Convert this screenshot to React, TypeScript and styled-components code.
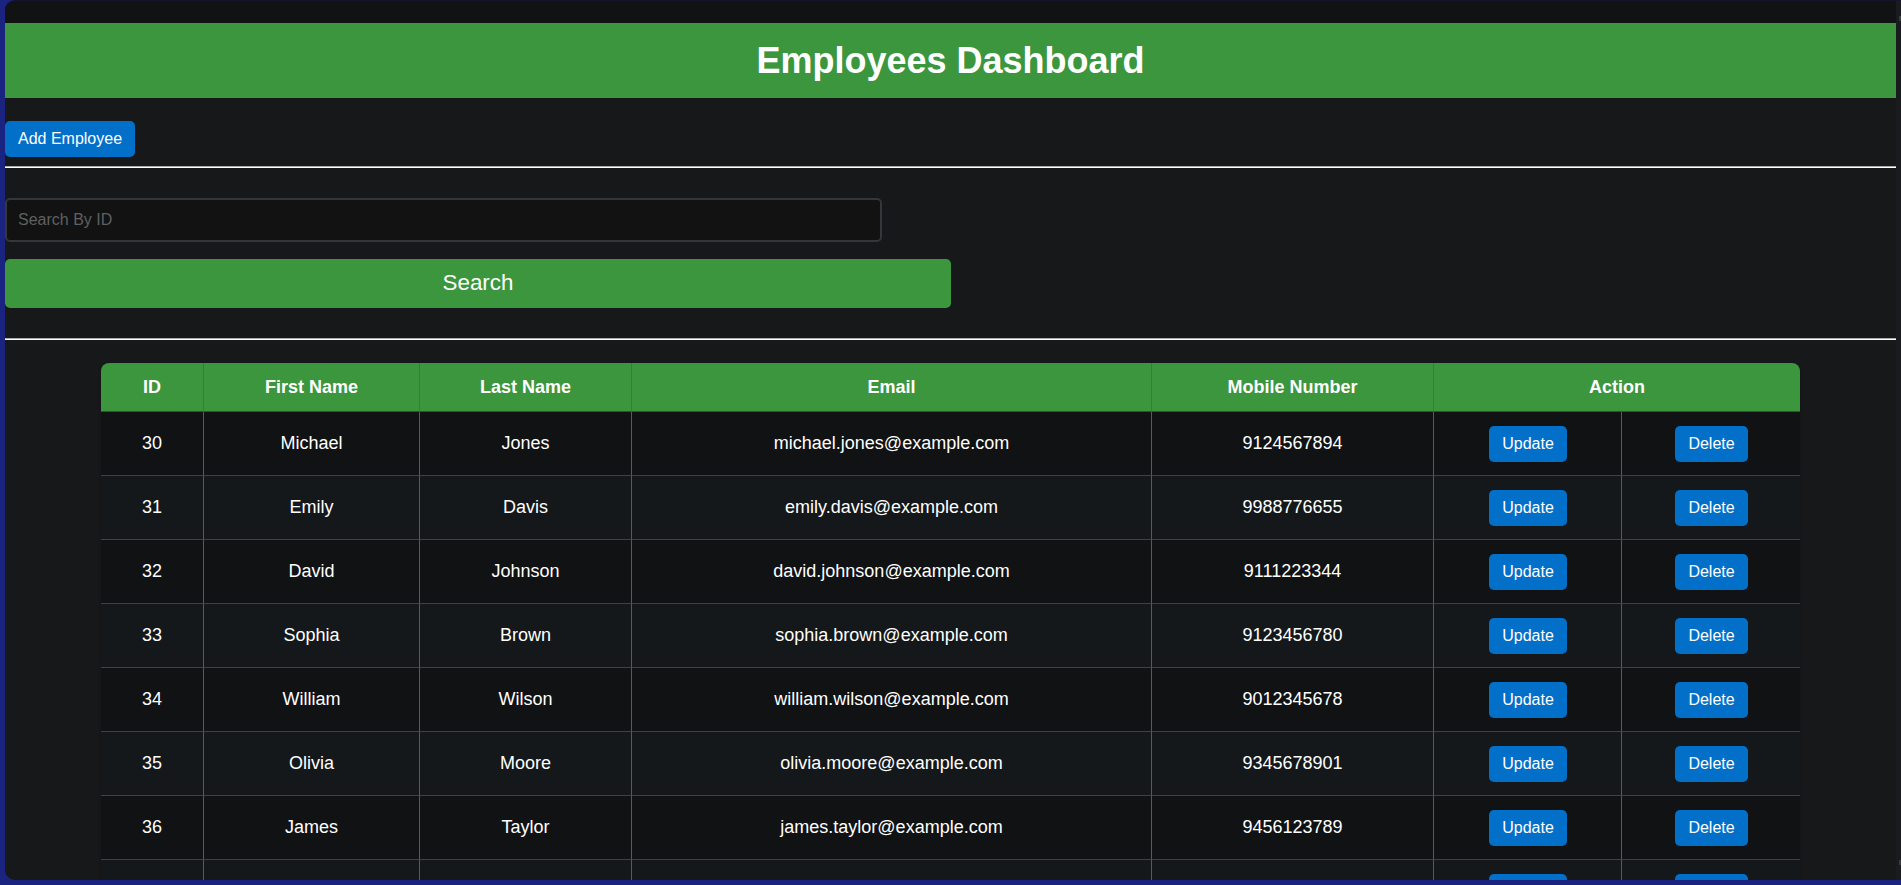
import styled, { createGlobalStyle } from "styled-components";

const employees = [
  { id: 30, firstName: "Michael", lastName: "Jones", email: "michael.jones@example.com", mobile: "9124567894" },
  { id: 31, firstName: "Emily", lastName: "Davis", email: "emily.davis@example.com", mobile: "9988776655" },
  { id: 32, firstName: "David", lastName: "Johnson", email: "david.johnson@example.com", mobile: "9111223344" },
  { id: 33, firstName: "Sophia", lastName: "Brown", email: "sophia.brown@example.com", mobile: "9123456780" },
  { id: 34, firstName: "William", lastName: "Wilson", email: "william.wilson@example.com", mobile: "9012345678" },
  { id: 35, firstName: "Olivia", lastName: "Moore", email: "olivia.moore@example.com", mobile: "9345678901" },
  { id: 36, firstName: "James", lastName: "Taylor", email: "james.taylor@example.com", mobile: "9456123789" },
  // only the tops of the buttons of this row are on screen
  { id: 37, firstName: "", lastName: "", email: "", mobile: "" },
];

const columnWidths = [103, 216, 212, 520, 282, 188, 178];

const App = () => {
  return (
    <>
      <GlobalStyle />
      <Window>
        <Content>
          <TopBand>
            <Banner>Employees Dashboard</Banner>
          </TopBand>
          <Toolbar>
            <AddButton type="button">Add Employee</AddButton>
          </Toolbar>
          <Divider />
          <SearchForm>
            <SearchInput placeholder="Search By ID" />
            <SearchButton type="button">Search</SearchButton>
          </SearchForm>
          <Divider />
          <TableWrap>
            <Table>
              <colgroup>
                {columnWidths.map((w, idx) => (
                  <Col key={idx} $width={w} />
                ))}
              </colgroup>
              <thead>
                <tr>
                  <HeadCell>ID</HeadCell>
                  <HeadCell>First Name</HeadCell>
                  <HeadCell>Last Name</HeadCell>
                  <HeadCell>Email</HeadCell>
                  <HeadCell>Mobile Number</HeadCell>
                  <HeadCell colSpan={2}>Action</HeadCell>
                </tr>
              </thead>
              <tbody>
                {employees.map((li) => (
                  <Row key={li.id}>
                    <Cell>{li.firstName ? li.id : ""}</Cell>
                    <Cell>{li.firstName}</Cell>
                    <Cell>{li.lastName}</Cell>
                    <Cell>{li.email}</Cell>
                    <Cell>{li.mobile}</Cell>
                    <Cell>
                      <RowButton type="button">Update</RowButton>
                    </Cell>
                    <Cell>
                      <RowButton type="button">Delete</RowButton>
                    </Cell>
                  </Row>
                ))}
              </tbody>
            </Table>
          </TableWrap>
        </Content>
        <ScrollRail />
      </Window>
    </>
  );
};

const GlobalStyle = createGlobalStyle`
  html, body {
    margin: 0;
    height: 100%;
    overflow: hidden;
    background: #1a2380;
  }
  body {
    font-family: "Liberation Sans", Arial, sans-serif;
    color: #fff;
  }
`;

const Window = styled.div`
  display: flex;
  height: 880px;
  margin-left: 5px;
  box-sizing: border-box;
  border-top: 1px solid #14152c;
  border-radius: 10px 0 0 10px;
  overflow: hidden;
  background: #16181a;
`;

const Content = styled.main`
  flex: 1;
  min-width: 0;
`;

const TopBand = styled.div`
  padding-top: 22px;
  background: #111214;
`;

const Banner = styled.h1`
  margin: 0;
  height: 75px;
  line-height: 75px;
  text-align: center;
  font-size: 36px;
  font-weight: bold;
  background: #3b963e;
`;

const Toolbar = styled.div`
  display: flex;
  padding-top: 23px;
`;

const BlueButton = styled.button`
  height: 36px;
  border: none;
  border-radius: 5px;
  background: #0270c9;
  color: #fff;
  font-family: inherit;
  font-size: 16px;
  cursor: pointer;
`;

const AddButton = styled(BlueButton)`
  padding: 0 12.5px 0 13px;
`;

const RowButton = styled(BlueButton)`
  margin-left: 1px;
  padding: 0 13px;
`;

const Divider = styled.hr`
  height: 1px;
  margin: 9px 0 0;
  border: none;
  border-top: 1px solid #a9a9a9;
  background: #fff;
`;

const SearchForm = styled.form`
  display: flex;
  flex-direction: column;
  align-items: flex-start;
  padding: 30px 0 21px;
`;

const SearchInput = styled.input`
  width: 877px;
  height: 44px;
  padding: 0 11px;
  box-sizing: border-box;
  border: 2px solid #33373a;
  border-radius: 5px;
  background: #121213;
  color: #fff;
  font-family: inherit;
  font-size: 16px;
  outline: none;

  &::placeholder {
    color: #5e6062;
    opacity: 1;
  }
`;

const SearchButton = styled.button`
  width: 946px;
  height: 49px;
  margin-top: 17px;
  padding: 0 0 2px;
  border: none;
  border-radius: 5px;
  background: #3b963e;
  color: #fff;
  font-family: inherit;
  font-size: 22.4px;
  cursor: pointer;
`;

const TableWrap = styled.div`
  padding: 23px 96px 0;
`;

const Table = styled.table`
  width: 1699px;
  table-layout: fixed;
  border-collapse: separate;
  border-spacing: 0;
  font-size: 18px;
  box-shadow: 0 0 3px rgba(0, 0, 0, 0.2);
  border-radius: 8px 8px 0 0;
`;

const Col = styled.col<{ $width: number }>`
  width: ${(p) => p.$width}px;
`;

const HeadCell = styled.th`
  height: 49px;
  padding: 0;
  box-sizing: border-box;
  background: #3b963e;
  border-right: 1px solid #5a635c;
  border-bottom: 1px solid #3f4a42;
  font-weight: bold;
  text-align: center;

  &:first-child {
    border-top-left-radius: 8px;
  }
  &:last-child {
    border-right: none;
    border-top-right-radius: 8px;
  }
`;

const Cell = styled.td`
  height: 64px;
  padding: 0;
  box-sizing: border-box;
  border-right: 1px solid #57595c;
  border-bottom: 1px solid #3f4144;
  text-align: center;

  &:last-child {
    border-right: none;
  }
`;

const Row = styled.tr`
  background: #101214;

  &:nth-child(even) {
    background: #14181a;
  }
`;

const ScrollRail = styled.div`
  position: relative;
  flex: 0 0 5px;
  background: #191b1e;

  &::before,
  &::after {
    content: "";
    position: absolute;
    right: 0;
    width: 2px;
    height: 5px;
    background: #3a3c3f;
  }
  &::before {
    top: 15px;
  }
  &::after {
    bottom: 15px;
  }
`;

export default App;
